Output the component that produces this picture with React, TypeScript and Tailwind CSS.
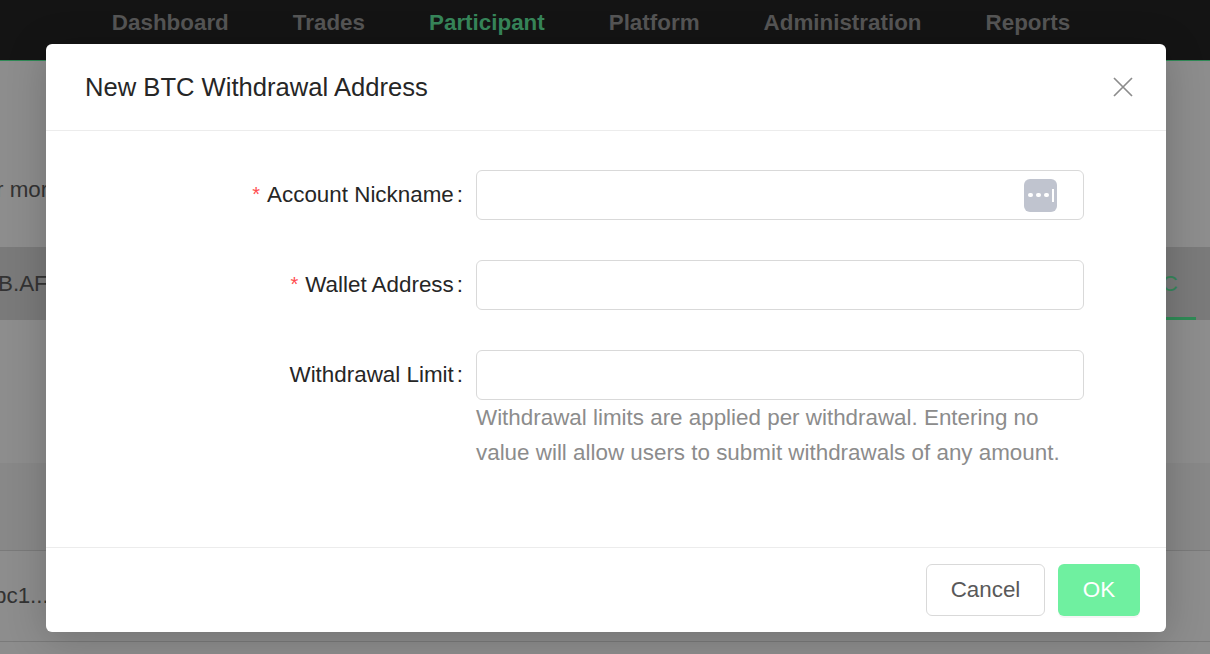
const font = { fontFamily: '"Liberation Sans", Arial, sans-serif' };

function Field({ label, required, dots }: { label: string; required?: boolean; dots?: boolean }) {
  return (
    <div className="flex h-[50px] items-center">
      <div className="flex w-[430px] shrink-0 items-center justify-end whitespace-nowrap text-[22.4px] leading-[50px] text-[#262626]">
        {required && <span className="mr-[7px] -translate-y-[1px] text-[20px] text-[#ff4d4f]">*</span>}
        <span>{label}</span>
        <span className="ml-[3px] mr-[13px]">:</span>
      </div>
      <div className="flex h-[50px] w-[608px] items-center justify-end rounded-[6px] border border-[#d9d9d9] bg-white pr-[26px]">
        {dots && (
          <div className="flex h-[33px] w-[33px] items-center gap-[3.5px] rounded-[6px] bg-[#c0c4cf] pl-[4px]">
            <span className="h-[4.5px] w-[4.5px] rounded-full bg-white" />
            <span className="h-[4.5px] w-[4.5px] rounded-full bg-white" />
            <span className="h-[4.5px] w-[4.5px] rounded-full bg-white" />
            <span className="h-[13px] w-[1.5px] bg-white" />
          </div>
        )}
      </div>
    </div>
  );
}

export default function App() {
  return (
    <div className="relative h-[654px] w-[1210px] overflow-hidden bg-[#8d8d8d]" style={font}>
      <header className="flex h-[61px] justify-center gap-[64px] border-b border-[#2f8a56] bg-[#141414] pt-[8px] pr-[28px] text-[22.4px] font-bold leading-[30px] text-[#555555]">
        <span>Dashboard</span>
        <span>Trades</span>
        <span className="text-[#37865a]">Participant</span>
        <span>Platform</span>
        <span>Administration</span>
        <span>Reports</span>
      </header>
      <main className="text-[22.4px] text-[#333333]">
        <div className="h-[186px] pt-[114px] leading-[30px]">
          <span className="-ml-[4px] block">r more</span>
        </div>
        <div className="flex h-[73px] items-center justify-between bg-[#7a7a7a]">
          <span className="-ml-[2px]">B.AF</span>
          <div className="relative flex h-[73px] w-[92px] items-center justify-end pr-[32px]">
            <span className="text-[#37865a]">BTC</span>
            <span className="absolute right-[14px] bottom-0 h-[3px] w-[78px] bg-[#2f8a56]" />
          </div>
        </div>
        <div className="h-[143px]" />
        <div className="h-[87px] bg-[#888888]" />
        <div className="flex h-[91px] items-center border-t border-[#7a7a7a] leading-[30px]">
          <span className="-ml-[6px]">bc1...</span>
        </div>
        <div className="h-[13px] border-t border-[#7a7a7a]" />
      </main>

      <div className="absolute top-[44px] left-[46px] flex h-[588px] w-[1120px] flex-col rounded-[6px] bg-white shadow-[0_6px_40px_rgba(0,0,0,0.2)]">
        <div className="relative flex h-[87px] shrink-0 items-center border-b border-[#ececec] pt-[1px] pl-[39px] text-[25.6px] text-[#262626]">
          <span>New BTC Withdrawal Address</span>
          <svg
            className="absolute top-[33px] right-[33px]"
            width="20"
            height="20"
            viewBox="0 0 20 20"
            fill="none"
            stroke="#8c8c8c"
            strokeWidth="1.7"
          >
            <path d="M1 1 19 19M19 1 1 19" />
          </svg>
        </div>
        <div className="flex flex-1 flex-col gap-[40px] pt-[39px]">
          <Field label="Account Nickname" required dots />
          <Field label="Wallet Address" required />
          <div>
            <Field label="Withdrawal Limit" />
            <p className="ml-[430px] w-[608px] text-[22.4px] leading-[35px] text-[#8c8c8c]">
              Withdrawal limits are applied per withdrawal. Entering no value will allow users to submit withdrawals of any amount.
            </p>
          </div>
        </div>
        <div className="flex h-[85px] shrink-0 items-start justify-end gap-[13px] border-t border-[#ececec] pt-[16px] pr-[26px] text-[22.4px]">
          <button className="h-[52px] w-[119px] rounded-[6px] border border-[#d9d9d9] bg-white text-[#595959]">Cancel</button>
          <button className="h-[52px] w-[82px] rounded-[6px] bg-[#6ff0a0] text-white shadow-[0_2px_0_rgba(0,0,0,0.04)]">OK</button>
        </div>
      </div>
    </div>
  );
}
